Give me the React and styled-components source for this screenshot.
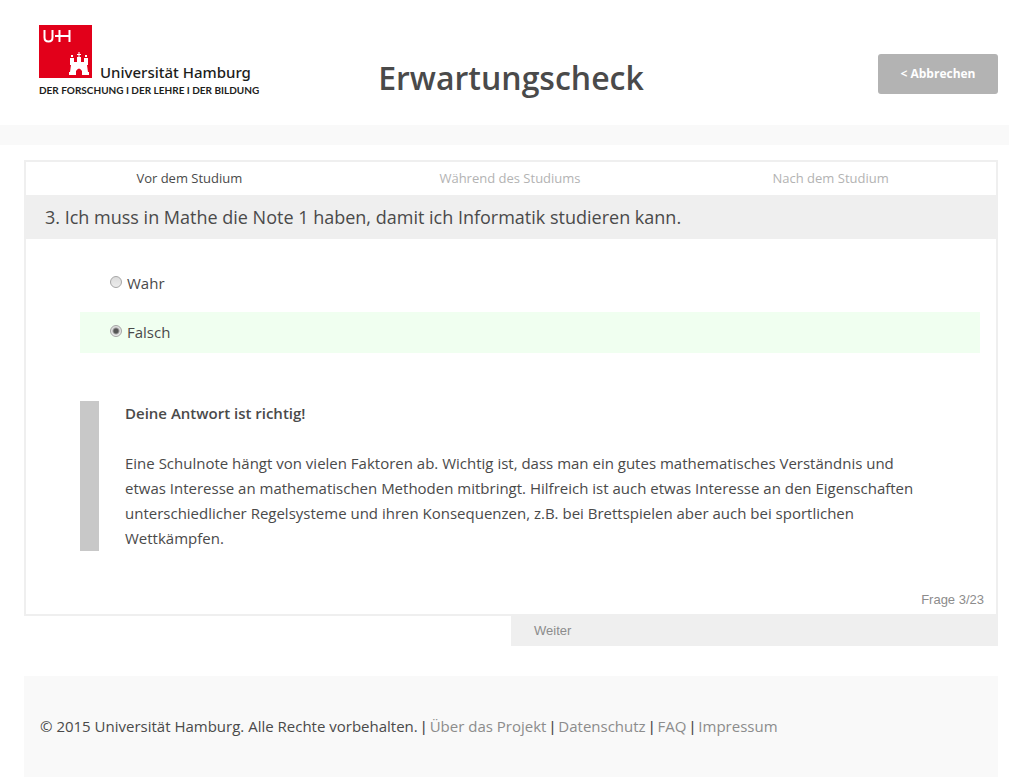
import React, { useState } from "react";
import styled, { createGlobalStyle } from "styled-components";

const GlobalStyle = createGlobalStyle`
  *, *::before, *::after { box-sizing: border-box; }
  body {
    margin: 0;
    background: #fff;
    color: #4a4a4a;
    font: 15px/25px "Open Sans", "Noto Sans", sans-serif;
  }
  button, input { font: inherit; }
`;

const Header = styled.header`
  display: grid;
  grid-template-columns: 1fr auto 1fr;
  align-items: center;
  height: 145px;
  padding: 0 11px 0 24px;
  border-bottom: 20px solid #f9f9f9;
`;

const Logo = styled.a`
  justify-self: start;
  display: block;
  margin: 0 0 3px 15px;
  color: #1d1d1b;
  text-decoration: none;
`;

const LogoTop = styled.span`
  display: flex;
  align-items: flex-end;
  gap: 8px;
`;

const LogoName = styled.span`
  font-family: "Noto Sans", sans-serif;
  font-size: 15px;
  font-weight: 500;
  line-height: 12px;
  white-space: nowrap;
`;

const LogoClaim = styled.span`
  display: block;
  margin-top: 5px;
  font-family: Lato, sans-serif;
  font-size: 10px;
  font-weight: 700;
  line-height: 14px;
  white-space: nowrap;
`;

const Title = styled.h1`
  margin: 0;
  padding-top: 30px;
  font-size: 32px;
  font-weight: 600;
  line-height: 34px;
`;

const CancelButton = styled.button`
  justify-self: end;
  width: 120px;
  height: 40px;
  margin-top: 23px;
  padding: 0 0 2px;
  border: 0;
  border-radius: 3px;
  background: #b3b3b3;
  color: #fff;
  font-size: 12px;
  font-weight: 700;
`;

const Content = styled.div`
  margin: 15px 11px 0 24px;
`;

const Panel = styled.main`
  border: 2px solid #efefef;
`;

const Tabs = styled.nav`
  display: grid;
  grid-template-columns: repeat(3, 1fr);
  padding: 0 5px 0 3px;
`;

const Tab = styled.a`
  color: ${(p) => (p.$active ? "#4a4a4a" : "#b3b3b3")};
  font-size: 13px;
  line-height: 33px;
  text-align: center;
  text-decoration: none;
`;

const Question = styled.h2`
  margin: 0;
  padding: 0 19px;
  background: #efefef;
  font-size: 18px;
  font-weight: 400;
  line-height: 44px;
`;

const Options = styled.form`
  display: grid;
  gap: 8px;
  padding: 24px 16px 0 54px;
`;

const Option = styled.label`
  display: flex;
  align-items: center;
  gap: 5px;
  height: 41px;
  padding-left: 30px;
  background: ${(p) => (p.$correct ? "#f0fff0" : "transparent")};
`;

const Radio = styled.input`
  appearance: none;
  width: 12px;
  height: 12px;
  margin: 0 0 3px;
  border: 1px solid #a6a6a6;
  border-radius: 50%;
  background: linear-gradient(#dcdcdc, #ececec);
  &:checked {
    background: radial-gradient(circle, #555 0 2px, transparent 4px), linear-gradient(#dcdcdc, #ececec);
  }
`;

const Feedback = styled.section`
  margin: 48px 60px 0 54px;
  padding-left: 26px;
  border-left: 19px solid #c8c8c8;
  p { margin: 0; }
`;

const FeedbackTitle = styled.h3`
  margin: 0 0 25px;
  font-size: 15px;
  font-weight: 600;
`;

const Counter = styled.p`
  margin: 36px 12px 2px;
  color: #8c8c8c;
  font-family: "Liberation Sans", Arial, sans-serif;
  font-size: 13px;
  text-align: right;
`;

const NextButton = styled.button`
  display: block;
  width: 50%;
  height: 30px;
  margin-left: auto;
  padding: 0 23px 2px;
  border: 0;
  background: #efefef;
  color: #8c8c8c;
  font-family: "Liberation Sans", Arial, sans-serif;
  font-size: 13px;
  text-align: left;
`;

const Footer = styled.footer`
  display: flex;
  flex-wrap: wrap;
  column-gap: 4px;
  margin: 30px 11px 2px 24px;
  padding: 38px 16px;
  background: #f9f9f9;
`;

const Separator = styled.span`
  font-family: "Liberation Sans", Arial, sans-serif;
`;

const FooterLink = styled.a`
  color: #8c8c8c;
  text-decoration: none;
`;

const tabs = ["Vor dem Studium", "Während des Studiums", "Nach dem Studium"];
const links = ["Über das Projekt", "Datenschutz", "FAQ", "Impressum"];

function Emblem() {
  return (
    <svg width="53" height="53" viewBox="0 0 53 53" aria-hidden="true">
      <rect width="53" height="53" fill="#e2001a" />
      <path d="M5.500 5v7.500q0 4 4 4t4-4V5M20.500 5v12M30.500 5v12M16 11h14.500" fill="none" stroke="#fff" strokeWidth="2" />
      <g fill="#fff">
        <path d="M30 50v-3h1l1-7h-1v-3h18v3h-1l1 7h1v3h-7v-4q-3-5-6 0v4z" />
        <path d="M31 33h4v5h-4zM45 33h4v5h-4zM38 32h4v6h-4z" />
        <path d="M32 30h2v2h-2zM46 30h2v2h-2zM39.500 27h1v5h-1zM38 29h4v1h-4z" />
      </g>
    </svg>
  );
}

export default function App() {
  const [answer, setAnswer] = useState("Falsch");
  return (
    <>
      <GlobalStyle />
      <Header>
        <Logo href="#">
          <LogoTop>
            <Emblem />
            <LogoName>Universität Hamburg</LogoName>
          </LogoTop>
          <LogoClaim>DER FORSCHUNG I DER LEHRE I DER BILDUNG</LogoClaim>
        </Logo>
        <Title>Erwartungscheck</Title>
        <CancelButton type="button">&lt; Abbrechen</CancelButton>
      </Header>
      <Content>
        <Panel>
          <Tabs>
            {tabs.map((name, i) => (
              <Tab key={name} href="#" $active={i === 0}>{name}</Tab>
            ))}
          </Tabs>
          <Question>3. Ich muss in Mathe die Note 1 haben, damit ich Informatik studieren kann.</Question>
          <Options>
            {["Wahr", "Falsch"].map((name) => (
              <Option key={name} $correct={name === "Falsch" && answer === name}>
                <Radio type="radio" name="answer" value={name} checked={answer === name} onChange={() => setAnswer(name)} />
                {name}
              </Option>
            ))}
          </Options>
          <Feedback>
            <FeedbackTitle>Deine Antwort ist richtig!</FeedbackTitle>
            <p>
              Eine Schulnote hängt von vielen Faktoren ab. Wichtig ist, dass man ein gutes mathematisches Verständnis und
              etwas Interesse an mathematischen Methoden mitbringt. Hilfreich ist auch etwas Interesse an den Eigenschaften
              unterschiedlicher Regelsysteme und ihren Konsequenzen, z.B. bei Brettspielen aber auch bei sportlichen
              Wettkämpfen.
            </p>
          </Feedback>
          <Counter>Frage 3/23</Counter>
        </Panel>
        <NextButton type="button">Weiter</NextButton>
      </Content>
      <Footer>
        <span>© 2015 Universität Hamburg. Alle Rechte vorbehalten.</span>
        {links.map((name) => (
          <React.Fragment key={name}>
            <Separator>|</Separator>
            <FooterLink href="#">{name}</FooterLink>
          </React.Fragment>
        ))}
      </Footer>
    </>
  );
}
